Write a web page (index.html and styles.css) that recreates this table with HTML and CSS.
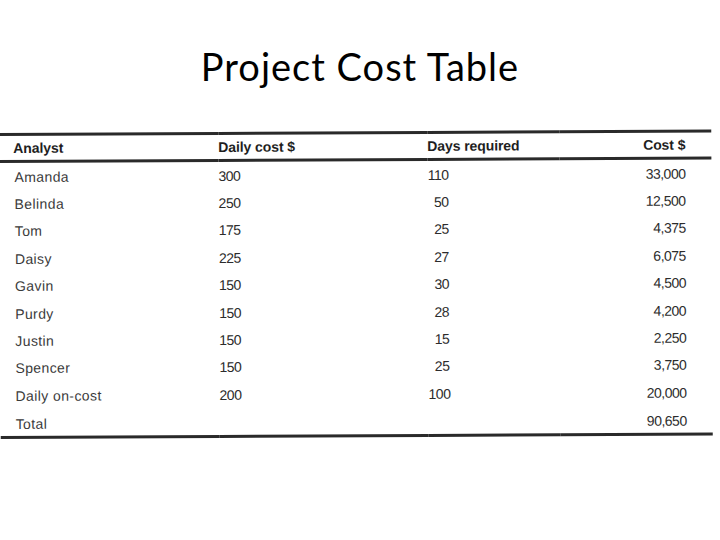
FILE: index.html
```html
<!DOCTYPE html>
<html lang="en">
<head>
<meta charset="utf-8">
<title>Project Cost Table</title>
<link rel="stylesheet" href="styles.css">
</head>
<body>
<div class="slide">
  <h1 class="title">Project Cost Table</h1>
  <div class="sheet">
    <table class="cost">
      <colgroup>
        <col class="w-name">
        <col class="w-daily">
        <col class="w-days">
        <col class="w-cost">
      </colgroup>
      <thead>
        <tr>
          <th class="c-name">Analyst</th>
          <th class="c-daily">Daily cost $</th>
          <th class="c-days">Days required</th>
          <th class="c-cost">Cost $</th>
        </tr>
      </thead>
      <tbody>
        <tr><td class="c-name">Amanda</td><td class="c-daily">300</td><td class="c-days">110</td><td class="c-cost">33,000</td></tr>
        <tr><td class="c-name">Belinda</td><td class="c-daily">250</td><td class="c-days">50</td><td class="c-cost">12,500</td></tr>
        <tr><td class="c-name">Tom</td><td class="c-daily">175</td><td class="c-days">25</td><td class="c-cost">4,375</td></tr>
        <tr><td class="c-name">Daisy</td><td class="c-daily">225</td><td class="c-days">27</td><td class="c-cost">6,075</td></tr>
        <tr><td class="c-name">Gavin</td><td class="c-daily">150</td><td class="c-days">30</td><td class="c-cost">4,500</td></tr>
        <tr><td class="c-name">Purdy</td><td class="c-daily">150</td><td class="c-days">28</td><td class="c-cost">4,200</td></tr>
        <tr><td class="c-name">Justin</td><td class="c-daily">150</td><td class="c-days">15</td><td class="c-cost">2,250</td></tr>
        <tr><td class="c-name">Spencer</td><td class="c-daily">150</td><td class="c-days">25</td><td class="c-cost">3,750</td></tr>
        <tr><td class="c-name">Daily on-cost</td><td class="c-daily">200</td><td class="c-days">100</td><td class="c-cost">20,000</td></tr>
        <tr class="total"><td class="c-name">Total</td><td class="c-daily"></td><td class="c-days"></td><td class="c-cost">90,650</td></tr>
      </tbody>
    </table>
  </div>
</div>
</body>
</html>
```
FILE: styles.css
```css
html, body {
  margin: 0;
  padding: 0;
  background: #ffffff;
}

.slide {
  width: 720px;
  height: 540px;
  padding-top: 45px;
  box-sizing: border-box;
}

.title {
  margin: 0;
  font-family: Lato, "Open Sans", sans-serif;
  font-weight: 400;
  font-size: 38px;
  letter-spacing: 1px;
  line-height: 43px;
  text-align: center;
  color: #000000;
}

.sheet {
  margin-top: 45px;
  width: 712px;
  transform: rotate(-0.28deg);
  transform-origin: 0 50%;
}

.cost {
  width: 712px;
  table-layout: fixed;
  border-collapse: collapse;
  font-family: "Liberation Sans", Arial, sans-serif;
  font-size: 14px;
  letter-spacing: -0.5px;
  color: #2c2c2c;
}

.w-name { width: 219px; }
.w-daily { width: 209px; }
.w-days { width: 132px; }
.w-cost { width: 152px; }

.cost thead tr {
  border-top: 3px solid #2a2a2a;
  border-bottom: 3px solid #2a2a2a;
}

.cost th {
  height: 24px;
  padding: 0;
  font-weight: 700;
  letter-spacing: -0.1px;
  color: #1e1e1e;
  text-align: left;
  vertical-align: middle;
}

.cost td {
  height: 27.4px;
  padding: 0;
  vertical-align: middle;
  white-space: nowrap;
}

.cost .c-name {
  padding-left: 15px;
}

.cost td.c-name {
  letter-spacing: 0.4px;
  color: #3a3a3a;
}

.cost th.c-name {
  padding-left: 14px;
}

.cost td.c-days {
  text-align: right;
  padding-right: 111px;
}

.cost .c-cost {
  text-align: right;
  padding-right: 26px;
}

.cost th.c-cost {
  text-align: right;
}

.cost .total td {
  height: 24px;
  padding-top: 2px;
  border-bottom: 3px solid #2a2a2a;
}
```
